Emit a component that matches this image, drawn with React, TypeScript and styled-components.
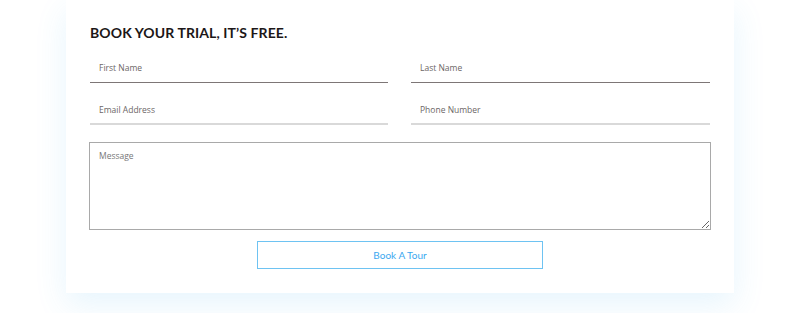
import React from "react"
import styled, { createGlobalStyle } from "styled-components"

const GlobalStyle = createGlobalStyle`
  * {
    box-sizing: border-box;
  }
  body {
    margin: 0;
    background: #fff;
    font-family: "Lato", "Open Sans", sans-serif;
  }
`

const Page = styled.div`
  display: flex;
  justify-content: center;
  padding-bottom: 20px;
`

const Card = styled.form`
  width: 668px;
  background: #fff;
  padding: 24px 24px 24px;
  box-shadow: 0 12px 30px rgba(60, 170, 240, 0.12);
  display: flex;
  flex-direction: column;
`

const Title = styled.h2`
  margin: 0 0 11px;
  font-size: 14px;
  font-weight: 700;
  letter-spacing: 0.1px;
  color: #1c1718;
`

const Grid = styled.div`
  display: grid;
  grid-template-columns: 298px 299px;
  column-gap: 23px;
  row-gap: 11px;
`

const Field = styled.input<{ $strong?: boolean }>`
  width: 100%;
  height: 31px;
  border: none;
  border-bottom: ${(p) => (p.$strong ? "1px solid #7d7676" : "2px solid #d9d9d9")};
  padding: 0 9px;
  padding-top: ${(p) => (p.$strong ? "0" : "1px")};
  font-family: "Open Sans", sans-serif;
  font-size: 8.5px;
  color: #333;
  outline: none;
  background: transparent;

  &::placeholder {
    color: #6c6666;
  }
`

const Message = styled.textarea`
  margin-top: 17px;
  width: 622px;
  margin-left: -1px;
  height: 88px;
  border: 1px solid #a9a9a9;
  padding: 7px 9px;
  font-family: "Open Sans", sans-serif;
  font-size: 8.5px;
  color: #333;
  outline: none;
  resize: vertical;

  &::placeholder {
    color: #777;
  }
`

const Submit = styled.button`
  align-self: center;
  margin-top: 11px;
  width: 286px;
  height: 28px;
  background: #fff;
  border: 1px solid #6ec3f2;
  color: #3ba8f0;
  font-family: "Lato", sans-serif;
  font-size: 10px;
  cursor: pointer;
`

export default function App() {
  return (
    <>
      <GlobalStyle />
      <Page>
        <Card onSubmit={(e) => e.preventDefault()}>
          <Title>BOOK YOUR TRIAL, IT’S FREE.</Title>
          <Grid>
            <Field $strong placeholder="First Name" />
            <Field $strong placeholder="Last Name" />
            <Field placeholder="Email Address" />
            <Field placeholder="Phone Number" />
          </Grid>
          <Message placeholder="Message" />
          <Submit type="submit">Book A Tour</Submit>
        </Card>
      </Page>
    </>
  )
}
